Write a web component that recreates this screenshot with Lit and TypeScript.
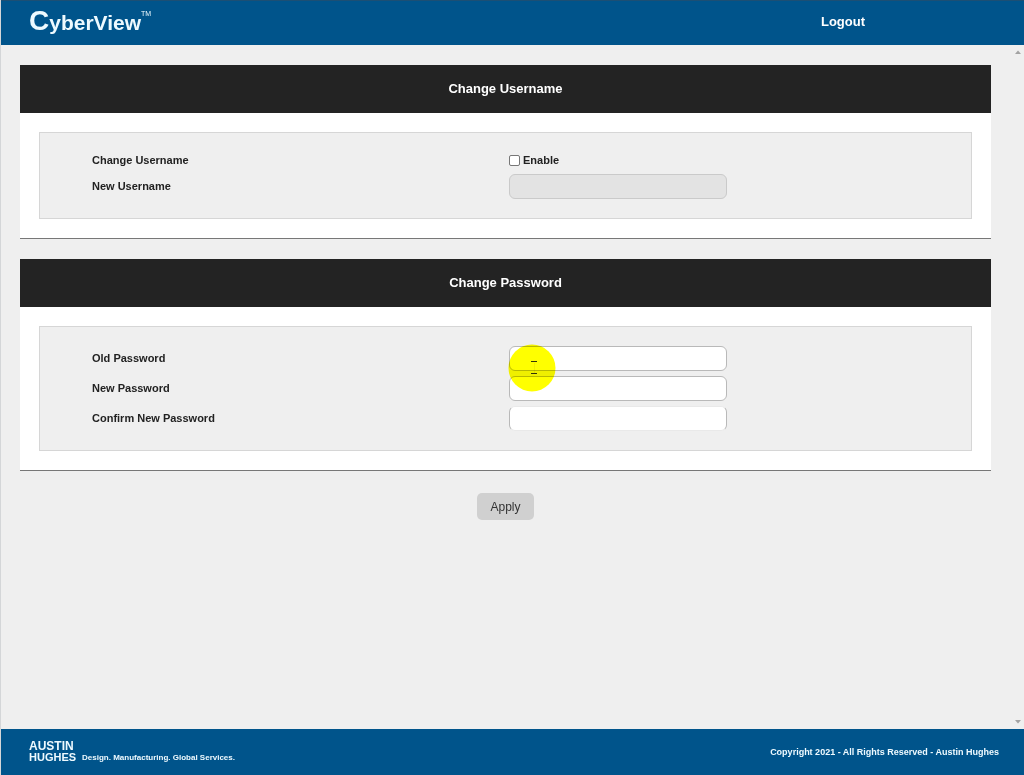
import { LitElement, html, css } from "lit";
import { customElement, state } from "lit/decorators.js";

@customElement("app-root")
export class AppRoot extends LitElement {
  @state() private usernameEnabled = false;

  static styles = css`
    :host {
      display: block;
      font-family: "Liberation Sans", Arial, sans-serif;
      color: #222;
    }
    * {
      box-sizing: border-box;
    }
    .page {
      display: flex;
      flex-direction: column;
      min-height: 100vh;
      background: #efefef;
      border-left: 1px solid #d4d6d8;
    }
    .topbar {
      display: flex;
      align-items: center;
      justify-content: space-between;
      height: 45px;
      padding: 0 159px 2px 28px;
      background: #00548b;
      border-top: 1px solid #1c4f74;
      color: #fff;
    }
    .brand {
      display: flex;
      align-items: baseline;
      font-size: 21px;
      line-height: 32px;
      font-weight: bold;
      color: #eefaff;
    }
    .brand-initial {
      font-size: 28px;
    }
    .brand-mark {
      align-self: flex-start;
      font-size: 7px;
      line-height: 18px;
      font-weight: normal;
    }
    .logout {
      color: #fff;
      font-size: 13px;
      line-height: 16px;
      font-weight: bold;
      text-decoration: none;
    }
    .content {
      position: relative;
      display: flex;
      flex: 1;
    }
    .sections {
      flex: 1;
      display: flex;
      flex-direction: column;
      gap: 20px;
      padding: 20px 20px 20px 19px;
    }
    .scroll {
      display: flex;
      flex-direction: column;
      justify-content: space-between;
      align-items: center;
      width: 13px;
      padding: 5px 0;
    }
    .arrow {
      display: block;
      width: 6px;
      height: 4px;
      fill: #a3a3a3;
    }
    .panel {
      background: #fff;
      border-bottom: 1px solid #777;
    }
    .panel-title {
      margin: 0;
      background: #232323;
      color: #fff;
      text-align: center;
      font-size: 13px;
      line-height: 48px;
      font-weight: bold;
    }
    .panel-body {
      padding: 19px;
    }
    .fields {
      display: grid;
      grid-template-columns: 1fr 1fr;
      align-items: center;
      row-gap: 5px;
      padding: 19px 45px 19px 52px;
      background: #efefef;
      border: 1px solid #d6d6d6;
      font-size: 11px;
      line-height: 17px;
      font-weight: bold;
    }
    .enable {
      display: flex;
      align-items: center;
      gap: 3px;
    }
    .tick {
      appearance: none;
      width: 11px;
      height: 11px;
      margin: 0;
      background: #fff;
      border: 1px solid #777;
      border-radius: 2px;
    }
    .tick:checked {
      background: #00548b;
    }
    .box {
      width: 218px;
      max-width: 100%;
      height: 25px;
      padding: 0 8px;
      background: #fff;
      border: 1px solid #b9b9b9;
      border-radius: 6px;
      font: inherit;
    }
    .box:disabled {
      background: #e3e3e3;
      border-color: #cacaca;
    }
    .box-soft {
      border-top-color: #e9e9e9;
      border-bottom-color: #e9e9e9;
    }
    .apply {
      align-self: center;
      height: 27px;
      margin-top: 2px;
      padding: 0 13px;
      background: #d0d0d0;
      border: 0;
      border-radius: 5px;
      color: #333;
      font-family: inherit;
      font-size: 12px;
    }
    .pointer {
      position: absolute;
      left: 507px;
      top: 299px;
      width: 48px;
      height: 48px;
      mix-blend-mode: multiply;
      pointer-events: none;
    }
    .footer {
      display: flex;
      align-items: center;
      justify-content: space-between;
      height: 46px;
      padding: 0 25px 0 28px;
      background: #00548b;
      color: #eefaff;
    }
    .company {
      display: flex;
      align-items: flex-end;
      gap: 6px;
      font-weight: bold;
    }
    .company-name {
      display: flex;
      flex-direction: column;
      font-size: 11px;
      line-height: 11px;
    }
    .company-first {
      font-size: 12px;
    }
    .tagline {
      font-size: 8px;
      line-height: 10px;
    }
    .copyright {
      font-size: 9px;
      line-height: 12px;
      font-weight: bold;
    }
  `;

  private toggle(e: Event) {
    this.usernameEnabled = (e.target as HTMLInputElement).checked;
  }

  render() {
    return html`
      <div class="page">
        <header class="topbar">
          <div class="brand">
            <span class="brand-initial">C</span><span>yberView</span><span class="brand-mark">TM</span>
          </div>
          <a class="logout" href="#logout">Logout</a>
        </header>
        <main class="content">
          <form class="sections" @submit=${(e: Event) => e.preventDefault()}>
            <section class="panel">
              <h2 class="panel-title">Change Username</h2>
              <div class="panel-body">
                <div class="fields">
                  <span>Change Username</span>
                  <label class="enable">
                    <input class="tick" type="checkbox" @change=${this.toggle} />Enable
                  </label>
                  <label for="new-username">New Username</label>
                  <input class="box" id="new-username" type="text" ?disabled=${!this.usernameEnabled} />
                </div>
              </div>
            </section>
            <section class="panel">
              <h2 class="panel-title">Change Password</h2>
              <div class="panel-body">
                <div class="fields">
                  <label for="old-password">Old Password</label>
                  <input class="box" id="old-password" type="password" />
                  <label for="new-password">New Password</label>
                  <input class="box" id="new-password" type="password" />
                  <label for="confirm-password">Confirm New Password</label>
                  <input class="box box-soft" id="confirm-password" type="password" />
                </div>
              </div>
            </section>
            <button class="apply" type="submit">Apply</button>
          </form>
          <div class="scroll" aria-hidden="true">
            <svg class="arrow" viewBox="0 0 6 4"><path d="M0 4 3 0.5 6 4Z" /></svg>
            <svg class="arrow" viewBox="0 0 6 4"><path d="M0 0 3 3.5 6 0Z" /></svg>
          </div>
          <svg class="pointer" viewBox="0 0 48 48" aria-hidden="true">
            <circle cx="24" cy="24" r="23.5" fill="#ffff00" />
            <path d="M26.5 19v10" stroke="#f4ee00" />
            <path d="M23 17.5h6M23 29.5h6" stroke="#33330a" />
          </svg>
        </main>
        <footer class="footer">
          <div class="company">
            <div class="company-name">
              <span class="company-first">AUSTIN</span><span>HUGHES</span>
            </div>
            <span class="tagline">Design. Manufacturing. Global Services.</span>
          </div>
          <span class="copyright">Copyright 2021 - All Rights Reserved - Austin Hughes</span>
        </footer>
      </div>
    `;
  }
}
